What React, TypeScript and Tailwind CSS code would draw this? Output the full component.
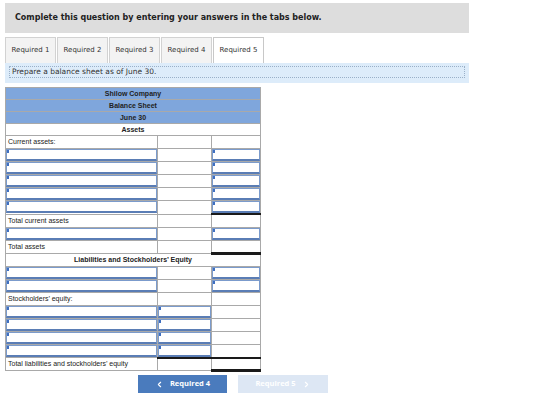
import React from "react";
import { ChevronLeft, ChevronRight } from "lucide-react";

type Row =
  | { kind: "label"; text: string; rightBottom?: string; midBottom?: string }
  | { kind: "input"; mid?: boolean; right?: boolean; rightBottom?: string; midBottom?: string }
  | { kind: "section"; text: string };

const rows: Row[] = [
  { kind: "label", text: "Current assets:" },
  { kind: "input", right: true },
  { kind: "input", right: true },
  { kind: "input", right: true },
  { kind: "input", right: true },
  { kind: "input", right: true, rightBottom: "border-b-2 border-b-[#1a1a1a]" },
  { kind: "label", text: "Total current assets" },
  { kind: "input", right: true },
  { kind: "label", text: "Total assets", rightBottom: "border-b-[3px] border-b-[#1a1a1a]" },
  { kind: "section", text: "Liabilities and Stockholders\u2019 Equity" },
  { kind: "input", right: true },
  { kind: "input", right: true },
  { kind: "label", text: "Stockholders\u2019 equity:" },
  { kind: "input", mid: true },
  { kind: "input", mid: true },
  { kind: "input", mid: true },
  {
    kind: "input",
    mid: true,
    midBottom: "border-b-2 border-b-[#1a1a1a]",
    rightBottom: "border-b-2 border-b-[#1a1a1a]",
  },
  { kind: "label", text: "Total liabilities and stockholders\u2019 equity", rightBottom: "border-b-[3px] border-b-[#1a1a1a]" },
];

function InputBox() {
  return (
    <div className="relative h-[12px] w-full border border-[#7b9bcc] border-b-2 border-b-[#5a7db5] bg-white">
      <span className="absolute left-0 top-0 h-[3px] w-[2px] bg-[#3f6fc0]" />
    </div>
  );
}

const cell = "border border-[#a9a9a9] h-[13px] p-0 align-middle leading-[10px]";

export default function App() {
  return (
    <div className="w-[560px] h-[419px] bg-white" style={{ fontFamily: "'Liberation Sans', Arial, sans-serif" }}>
      <div className="pt-[3px] pl-[5px] w-[469px]">
        <div
          className="h-[30px] bg-[#dddddd] flex items-center pl-[10px] text-[8px] font-bold text-[#222]"
          style={{ fontFamily: "'DejaVu Sans', Verdana, sans-serif" }}
        >
          Complete this question by entering your answers in the tabs below.
        </div>

        <div className="flex mt-[4px] h-[26px]" style={{ fontFamily: "'DejaVu Sans', Verdana, sans-serif" }}>
          {[1, 2, 3, 4, 5].map((n) => (
            <div
              key={n}
              className={
                n === 5
                  ? "w-[51px] mr-[1px] border border-[#c8c8c8] border-b-0 bg-white flex items-center justify-center text-[7px] text-[#333]"
                  : "w-[51px] mr-[1px] border border-[#d2d2d2] border-b-0 bg-[#f3f3f3] flex items-center justify-center text-[7px] text-[#333]"
              }
            >
              Required {n}
            </div>
          ))}
        </div>

        <div className="h-[20px] bg-[#ddecfa] px-[4px] pt-[3px]">
          <div
            className="h-[12px] border border-dotted border-[#9ab0c8] pl-[2px] text-[7.5px] leading-[10px] text-[#333]"
            style={{ fontFamily: "'DejaVu Sans', Verdana, sans-serif" }}
          >
            Prepare a balance sheet as of June 30.
          </div>
        </div>

        <table className="mt-[4px] w-[255px] border-collapse text-[7px] text-[#222] table-fixed">
          <colgroup>
            <col className="w-[152px]" />
            <col className="w-[54px]" />
            <col className="w-[49px]" />
          </colgroup>
          <tbody>
            {["Shilow Company", "Balance Sheet", "June 30"].map((t) => (
              <tr key={t}>
                <td colSpan={3} className="h-[12px] border border-[#a9a9a9] bg-[#7fa6dc] text-center font-bold p-0 leading-[10px]">
                  {t}
                </td>
              </tr>
            ))}
            <tr>
              <td colSpan={3} className="h-[12px] border border-[#a9a9a9] bg-white text-center font-bold p-0 leading-[10px]">
                Assets
              </td>
            </tr>
            {rows.map((r, i) => {
              if (r.kind === "section") {
                return (
                  <tr key={i}>
                    <td colSpan={3} className={`${cell} text-center font-bold`}>
                      {r.text}
                    </td>
                  </tr>
                );
              }
              if (r.kind === "label") {
                return (
                  <tr key={i}>
                    <td className={`${cell} pl-[2px]`}>{r.text}</td>
                    <td className={`${cell} ${r.midBottom ?? ""}`} />
                    <td className={`${cell} ${r.rightBottom ?? ""}`} />
                  </tr>
                );
              }
              return (
                <tr key={i}>
                  <td className={cell}>
                    <InputBox />
                  </td>
                  <td className={`${cell} ${r.midBottom ?? ""}`}>{r.mid ? <InputBox /> : null}</td>
                  <td className={`${cell} ${r.rightBottom ?? ""}`}>{r.right ? <InputBox /> : null}</td>
                </tr>
              );
            })}
          </tbody>
        </table>

        <div className="flex mt-[3px] ml-[133px] gap-[11px]" style={{ fontFamily: "'Open Sans', 'DejaVu Sans', sans-serif" }}>
          <div className="w-[89px] h-[18px] bg-[#4a7bbd] flex items-center justify-center gap-[6px] text-white text-[7.5px] font-bold">
            <ChevronLeft size={9} strokeWidth={3} />
            <span>Required 4</span>
          </div>
          <div className="w-[90px] h-[18px] bg-[#dde7f4] flex items-center justify-center gap-[6px] text-white text-[7.5px] font-bold">
            <span>Required 5</span>
            <ChevronRight size={9} strokeWidth={3} />
          </div>
        </div>
      </div>
    </div>
  );
}
